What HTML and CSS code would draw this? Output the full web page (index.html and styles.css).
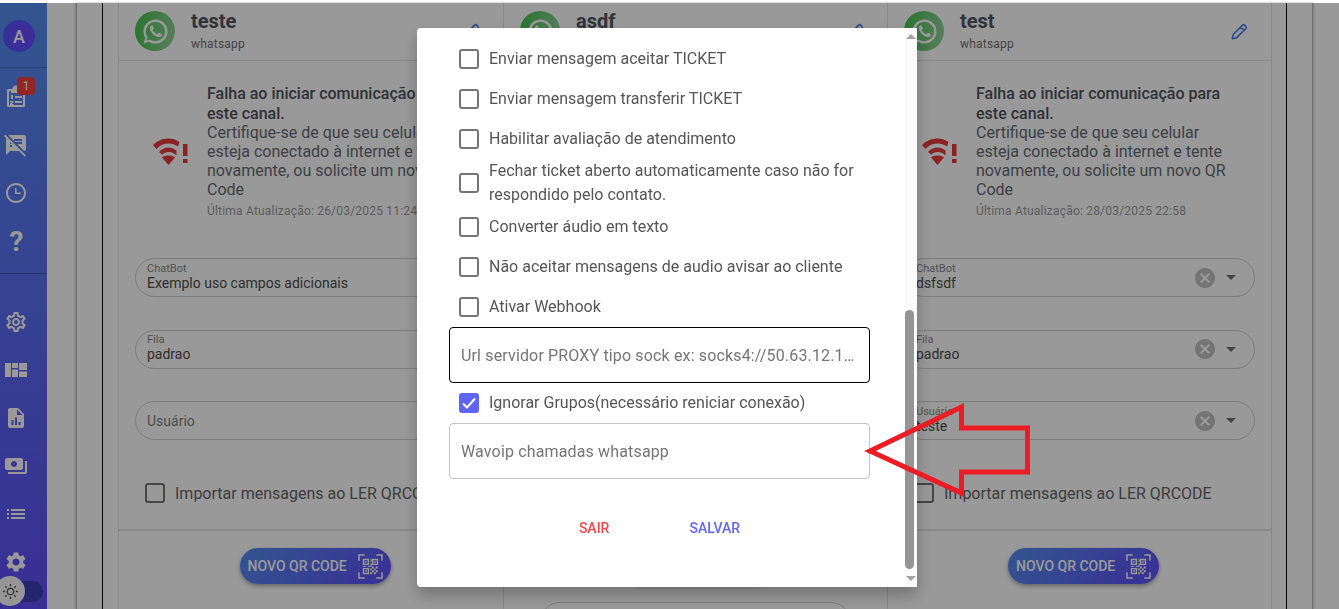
FILE: index.html
```html
<!DOCTYPE html>
<html lang="pt-BR">
<head>
<meta charset="utf-8">
<title>Conexões</title>
<link rel="stylesheet" href="styles.css">
</head>
<body>
<svg class="defs" aria-hidden="true">
  <defs>
    <symbol id="wa" viewBox="0 0 24 24"><path d="M16.75 13.96c.25.13.41.2.46.3.06.11.04.61-.21 1.18-.2.56-1.24 1.1-1.7 1.12-.46.02-.47.36-2.96-.73-2.49-1.09-3.99-3.75-4.11-3.92-.12-.17-.96-1.38-.92-2.61.05-1.22.69-1.8.95-2.04.24-.26.51-.29.68-.26h.47c.15 0 .36-.06.55.45l.69 1.87c.06.13.1.28.01.44l-.27.41-.39.42c-.12.12-.26.25-.12.5.12.26.62 1.09 1.32 1.78.91.88 1.71 1.17 1.95 1.3.24.14.39.12.54-.04l.81-.94c.19-.25.35-.19.58-.11l1.67.88M12 2a10 10 0 0 1 10 10 10 10 0 0 1-10 10c-1.97 0-3.8-.57-5.35-1.55L2 22l1.55-4.65A9.969 9.969 0 0 1 2 12 10 10 0 0 1 12 2m0 2a8 8 0 0 0-8 8c0 1.72.54 3.31 1.46 4.61L4.5 19.5l2.89-.96A7.95 7.95 0 0 0 12 20a8 8 0 0 0 8-8 8 8 0 0 0-8-8z"/></symbol>
    <symbol id="pen" viewBox="0 0 24 24"><path d="M4 20l1-5L16 4a2.2 2.2 0 0 1 3.1 0l.9.9a2.2 2.2 0 0 1 0 3.1L9 19z M14 6l4 4" fill="none" stroke="currentColor" stroke-width="2" stroke-linejoin="round"/></symbol>
    <symbol id="wifi" viewBox="0 0 36 30">
      <path d="M0 10C4.500 5.500 10 3.500 15.500 3.500c4 0 7.500 1 11 3.500l-1.500 4.500C22 9.500 19 8.500 15.500 8.500 11 8.500 7 10 3.500 14z"/>
      <path d="M6 17c2.700-3 5.800-4.500 9.500-4.500 2.800 0 5.300 1 8 3v5c-2.500-2.500-5-3.500-8-3.500-2.600 0-4.600 1-6 2.700z"/>
      <path d="M15.500 30L9 22.500c1.900-1.500 3.900-2 6.500-2s4.600.5 6.500 2z"/>
      <rect x="30" y="9" width="4.500" height="12"/><rect x="30" y="24" width="4.500" height="4"/>
    </symbol>
    <symbol id="clear" viewBox="0 0 20 20"><path d="M10 0C4.470 0 0 4.470 0 10s4.470 10 10 10 10-4.470 10-10S15.530 0 10 0zm5 13.590L13.590 15 10 11.410 6.410 15 5 13.590 8.590 10 5 6.410 6.410 5 10 8.590 13.590 5 15 6.410 11.410 10 15 13.590z"/></symbol>
    <symbol id="qr" viewBox="0 0 26 26">
      <path d="M1 7V1h6M19 1h6v6M25 19v6h-6M7 25H1v-6" fill="none" stroke="currentColor" stroke-width="1.600"/>
      <path fill="none" stroke="currentColor" stroke-width="1.500" d="M5.800 5.800h5v5h-5zM15.200 5.800h5v5h-5zM5.800 15.200h5v5h-5z"/>
      <path d="M7.500 7.500h1.600v1.600H7.500zM16.900 7.500h1.600v1.600h-1.600zM7.500 16.900h1.600v1.600H7.500zM13 5h1.200v3H13zM13 10h1.200v3H13zM5 12.400h3v1.200H5zM10 12.400h3v1.200h-3zM14.500 13h2v2h-2zM18.500 13h2v2h-2zM12.500 15h2v2h-2zM16.500 15h2v2h-2zM14.500 17h2v2h-2zM18.500 17h2v2h-2zM12.500 19h2v2h-2zM16.500 19h2v2h-2z"/>
    </symbol>
  </defs>
</svg>

<div class="app">
  <nav class="sidebar">
    <div class="side-top"><span class="avatar">A</span></div>
    <div class="side-group group-main">
      <span class="side-item">
        <svg class="side-icon" viewBox="0 0 24 24"><path fill-rule="evenodd" d="M4 4h4.500a3.500 3.500 0 0 1 7 0H20a1 1 0 0 1 1 1v16a1 1 0 0 1-1 1H4a1 1 0 0 1-1-1V5a1 1 0 0 1 1-1zm1 2v14h14V6h-2v2H7V6zm6 5h7v2h-7zm0 5h7v2h-7zM7 10h2v4H7zm-1 6h3.500v1.200L7.800 19h1.700v1H6v-1.200L7.700 17H6z"/></svg>
        <span class="badge">1</span>
      </span>
      <span class="side-item"><svg class="side-icon" viewBox="0 0 24 24"><path d="M10.540 11l-.54-.54L7.540 8 6 6.460 2.380 2.840 1.270 1.730 0 3l2.010 2.010L2 22l4-4h9l5.730 5.730L22 22.460 17.540 18l-7-7zM8 14H6v-2h2v2zm-2-3V9l2 2H6zm14-9H4.080L10 7.920V6h8v2h-7.920l1 1H18v2h-4.920l6.990 6.990C21.140 17.950 22 17.080 22 16V4c0-1.100-.9-2-2-2z"/></svg></span>
      <span class="side-item"><svg class="side-icon" viewBox="0 0 24 24"><path d="M11.990 2C6.470 2 2 6.480 2 12s4.470 10 9.990 10C17.520 22 22 17.520 22 12S17.520 2 11.990 2zM12 20c-4.420 0-8-3.580-8-8s3.580-8 8-8 8 3.580 8 8-3.580 8-8 8zm.5-13H11v6h6v-1.500h-4.500z"/></svg></span>
      <span class="side-item help">?</span>
    </div>
    <div class="side-group group-admin">
      <span class="side-item"><svg class="side-icon" viewBox="0 0 24 24"><path d="M19.430 12.980c.04-.32.07-.64.07-.98 0-.34-.03-.66-.07-.98l2.110-1.650c.19-.15.24-.42.12-.64l-2-3.460c-.09-.16-.26-.25-.44-.25-.06 0-.12.01-.17.03l-2.490 1c-.52-.4-1.080-.73-1.690-.98l-.38-2.650C14.460 2.180 14.250 2 14 2h-4c-.25 0-.46.18-.49.42l-.38 2.650c-.61.25-1.170.59-1.690.98l-2.490-1c-.06-.02-.12-.03-.18-.03-.17 0-.34.09-.43.25l-2 3.460c-.13.22-.07.49.12.64l2.110 1.650c-.04.32-.07.65-.07.98 0 .33.03.66.07.98l-2.110 1.650c-.19.15-.24.42-.12.64l2 3.460c.09.16.26.25.44.25.06 0 .12-.01.17-.03l2.490-1c.52.4 1.080.73 1.690.98l.38 2.650c.03.24.24.42.49.42h4c.25 0 .46-.18.49-.42l.38-2.650c.61-.25 1.170-.59 1.690-.98l2.490 1c.06.02.12.03.18.03.17 0 .34-.09.43-.25l2-3.460c.12-.22.07-.49-.12-.64l-2.110-1.650zm-1.980-1.710c.04.31.05.52.05.73 0 .21-.02.43-.05.73l-.14 1.130.89.7 1.080.84-.7 1.210-1.270-.51-1.040-.42-.9.68c-.43.32-.84.56-1.250.73l-1.060.43-.16 1.130-.2 1.350h-1.400l-.19-1.350-.16-1.130-1.060-.43c-.43-.18-.83-.41-1.230-.71l-.91-.7-1.060.43-1.270.51-.7-1.210 1.080-.84.89-.7-.14-1.130c-.03-.31-.05-.54-.05-.74s.02-.43.05-.73l.14-1.130-.89-.7-1.080-.84.7-1.210 1.270.51 1.040.42.9-.68c.43-.32.84-.56 1.250-.73l1.060-.43.16-1.130.2-1.350h1.390l.19 1.350.16 1.130 1.060.43c.43.18.83.41 1.230.71l.91.7 1.060-.43 1.270-.51.7 1.210-1.070.85-.89.7.14 1.130zM12 8c-2.210 0-4 1.790-4 4s1.790 4 4 4 4-1.790 4-4-1.790-4-4-4zm0 6c-1.100 0-2-.9-2-2s.9-2 2-2 2 .9 2 2-.9 2-2 2z"/></svg></span>
      <span class="side-item"><svg class="side-icon" viewBox="0 0 24 24"><path d="M1 5h6v14H1zM8 5h6v5H8zM8 11.500h6V19H8zM15 5h8v7h-8zM15 13.500h8V19h-8z"/></svg></span>
      <span class="side-item"><svg class="side-icon" viewBox="0 0 24 24"><path fill-rule="evenodd" d="M14 2H6a2 2 0 0 0-2 2v16a2 2 0 0 0 2 2h12a2 2 0 0 0 2-2V8zm-1 7V3.500L18.500 9zM7.500 19v-5h2v5zm3.500 0v-7.500h2V19zm3.500 0v-3h2v3z"/></svg></span>
      <span class="side-item"><svg class="side-icon" viewBox="0 0 24 24"><path d="M19 14V6c0-1.100-.9-2-2-2H3c-1.100 0-2 .9-2 2v8c0 1.100.9 2 2 2h14c1.100 0 2-.9 2-2zm-9-1c-1.660 0-3-1.340-3-3s1.340-3 3-3 3 1.340 3 3-1.340 3-3 3zm13-6v11c0 1.100-.9 2-2 2H4v-2h17V7h2z"/></svg></span>
      <span class="side-item"><svg class="side-icon" viewBox="0 0 24 24"><path d="M3 13h2v-2H3v2zm0 4h2v-2H3v2zm0-8h2V7H3v2zm4 4h14v-2H7v2zm0 4h14v-2H7v2zM7 7v2h14V7H7z"/></svg></span>
      <span class="side-item"><svg class="side-icon" viewBox="0 0 24 24"><path d="M19.140 12.940c.04-.3.06-.61.06-.94 0-.32-.02-.64-.07-.94l2.030-1.580c.18-.14.23-.41.12-.61l-1.920-3.320c-.12-.22-.37-.29-.59-.22l-2.390.96c-.5-.38-1.030-.7-1.620-.94l-.36-2.540c-.04-.24-.24-.41-.48-.41h-3.840c-.24 0-.43.17-.47.41l-.36 2.540c-.59.24-1.130.57-1.620.94l-2.390-.96c-.22-.08-.47 0-.59.22L2.740 8.870c-.12.21-.08.47.12.61l2.030 1.580c-.05.3-.09.63-.09.94s.02.64.07.94l-2.030 1.580c-.18.14-.23.41-.12.61l1.920 3.320c.12.22.37.29.59.22l2.390-.96c.5.38 1.030.7 1.620.94l.36 2.540c.05.24.24.41.48.41h3.840c.24 0 .44-.17.47-.41l.36-2.540c.59-.24 1.130-.56 1.620-.94l2.390.96c.22.08.47 0 .59-.22l1.920-3.320c.12-.22.07-.47-.12-.61l-2.010-1.580zM12 15.600c-1.980 0-3.600-1.620-3.600-3.600s1.620-3.600 3.600-3.600 3.600 1.620 3.600 3.600-1.620 3.600-3.600 3.600z"/></svg></span>
    </div>
    <div class="theme-toggle">
      <span class="theme-knob"><svg class="sun" viewBox="0 0 24 24"><circle cx="12" cy="12" r="4.500" fill="none" stroke="currentColor" stroke-width="1.800"/><path d="M12 1.500v3M12 19.500v3M1.500 12h3M19.500 12h3M4.600 4.600l2 2M17.400 17.400l2 2M4.600 19.400l2-2M17.400 6.600l2-2" stroke="currentColor" stroke-width="1.800" fill="none"/></svg></span>
    </div>
  </nav>

  <main class="main">
    <div class="shell">
      <div class="inner">
        <div class="cards">

          <section class="card">
            <header class="card-head">
              <span class="wa-badge"><svg class="wa-icon"><use href="#wa"/></svg></span>
              <div class="card-name"><h2>teste</h2><p>whatsapp</p></div>
              <svg class="pen"><use href="#pen"/></svg>
            </header>
            <div class="status">
              <svg class="wifi"><use href="#wifi"/></svg>
              <div class="status-text">
                <strong>Falha ao iniciar comunicação para este canal.</strong>
                <span>Certifique-se de que seu celular esteja conectado à internet e tente novamente, ou solicite um novo QR Code</span>
                <small>Última Atualização: 26/03/2025 11:24</small>
              </div>
            </div>
            <div class="fields">
              <div class="select"><div class="select-val"><label>ChatBot</label><span>Exemplo uso campos adicionais</span></div><svg class="clear"><use href="#clear"/></svg><i class="caret"></i></div>
              <div class="select"><div class="select-val"><label>Fila</label><span>padrao</span></div><svg class="clear"><use href="#clear"/></svg><i class="caret"></i></div>
              <div class="select"><div class="select-val select-empty"><span class="ph">Usuário</span></div><i class="caret"></i></div>
            </div>
            <label class="import"><i class="box"></i>Importar mensagens ao LER QRCODE</label>
            <div class="card-foot"><span class="qr-btn">NOVO QR CODE<svg class="qr"><use href="#qr"/></svg></span></div>
          </section>

          <section class="card">
            <header class="card-head">
              <span class="wa-badge"><svg class="wa-icon"><use href="#wa"/></svg></span>
              <div class="card-name"><h2>asdf</h2><p>whatsapp</p></div>
              <svg class="pen"><use href="#pen"/></svg>
            </header>
            <div class="status">
              <svg class="wifi"><use href="#wifi"/></svg>
              <div class="status-text">
                <strong>Falha ao iniciar comunicação para este canal.</strong>
                <span>Certifique-se de que seu celular esteja conectado à internet e tente novamente, ou solicite um novo QR Code</span>
                <small>Última Atualização: 26/03/2025 11:24</small>
              </div>
            </div>
            <div class="fields">
              <div class="select"><div class="select-val"><label>ChatBot</label><span>Exemplo</span></div><svg class="clear"><use href="#clear"/></svg><i class="caret"></i></div>
              <div class="select"><div class="select-val"><label>Fila</label><span>padrao</span></div><svg class="clear"><use href="#clear"/></svg><i class="caret"></i></div>
              <div class="select"><div class="select-val select-empty"><span class="ph">Usuário</span></div><i class="caret"></i></div>
            </div>
            <label class="import"><i class="box"></i>Importar mensagens ao LER QRCODE</label>
            <div class="card-foot"><span class="qr-btn">NOVO QR CODE<svg class="qr"><use href="#qr"/></svg></span></div>
            <div class="extra"></div>
          </section>

          <section class="card">
            <header class="card-head">
              <span class="wa-badge"><svg class="wa-icon"><use href="#wa"/></svg></span>
              <div class="card-name"><h2>test</h2><p>whatsapp</p></div>
              <svg class="pen"><use href="#pen"/></svg>
            </header>
            <div class="status">
              <svg class="wifi"><use href="#wifi"/></svg>
              <div class="status-text">
                <strong>Falha ao iniciar comunicação para este canal.</strong>
                <span>Certifique-se de que seu celular esteja conectado à internet e tente novamente, ou solicite um novo QR Code</span>
                <small>Última Atualização: 28/03/2025 22:58</small>
              </div>
            </div>
            <div class="fields">
              <div class="select"><div class="select-val"><label>ChatBot</label><span>dsfsdf</span></div><svg class="clear"><use href="#clear"/></svg><i class="caret"></i></div>
              <div class="select"><div class="select-val"><label>Fila</label><span>padrao</span></div><svg class="clear"><use href="#clear"/></svg><i class="caret"></i></div>
              <div class="select"><div class="select-val"><label>Usuário</label><span>teste</span></div><svg class="clear"><use href="#clear"/></svg><i class="caret"></i></div>
            </div>
            <label class="import"><i class="box"></i>Importar mensagens ao LER QRCODE</label>
            <div class="card-foot"><span class="qr-btn">NOVO QR CODE<svg class="qr"><use href="#qr"/></svg></span></div>
          </section>

        </div>
      </div>
    </div>
  </main>
</div>

<div class="backdrop"></div>

<div class="modal">
  <div class="modal-body">
    <label class="check"><i class="box"></i>Enviar mensagem aceitar TICKET</label>
    <label class="check"><i class="box"></i>Enviar mensagem transferir TICKET</label>
    <label class="check"><i class="box"></i>Habilitar avaliação de atendimento</label>
    <label class="check check-tall"><i class="box"></i><span>Fechar ticket aberto automaticamente caso não for respondido pelo contato.</span></label>
    <label class="check"><i class="box"></i>Converter áudio em texto</label>
    <label class="check"><i class="box"></i>Não aceitar mensagens de audio avisar ao cliente</label>
    <label class="check"><i class="box"></i>Ativar Webhook</label>
    <div class="input input-focus"><span>Url servidor PROXY tipo sock ex: socks4://50.63.12.101:1080</span></div>
    <label class="check"><i class="box box-on"><svg viewBox="0 0 20 20"><path d="M4 10.500l4 4 8-9" fill="none" stroke="#fff" stroke-width="2"/></svg></i>Ignorar Grupos(necessário reniciar conexão)</label>
    <div class="input"><span>Wavoip chamadas whatsapp</span></div>
    <div class="actions"><button class="btn btn-exit">SAIR</button><button class="btn btn-save">SALVAR</button></div>
  </div>
  <div class="scrollbar">
    <i class="arrow-up"></i>
    <div class="track"><div class="thumb"></div></div>
    <i class="arrow-down"></i>
  </div>
</div>

<svg class="annot" viewBox="0 0 175 104" aria-hidden="true">
  <polygon points="10,53 101.500,9 101.500,30 167.500,30 167.500,74 101.500,74 101.500,95" fill="none" stroke="#ed1c24" stroke-width="5"/>
</svg>
</body>
</html>
```
FILE: styles.css
```css
* { box-sizing: border-box; }
html, body { margin: 0; height: 100%; overflow: hidden; }
body { font-family: Roboto, "Liberation Sans", sans-serif; color: #555; background: #fff; }
.defs { width: 0; height: 0; position: absolute; }
.app { display: flex; height: 609px; padding-top: 3px; }

.sidebar { position: relative; width: 47px; flex: none; background: linear-gradient(180deg, #558eef 0%, #5f4ef8 100%); display: flex; flex-direction: column; color: #fff; }
.side-top { height: 65px; padding: 17px 0 0 3px; display: flex; border-bottom: 1px solid rgba(0,0,0,.2); }
.avatar { width: 32px; height: 32px; border-radius: 50%; background: #624dff; display: flex; align-items: center; justify-content: center; font-size: 18px; font-weight: 500; }
.side-group { display: flex; flex-direction: column; }
.group-main { height: 206px; padding-top: 5px; border-bottom: 1px solid rgba(0,0,0,.2); flex: none; }
.side-item { position: relative; height: 48px; display: flex; align-items: center; justify-content: center; padding-right: 15px; flex: none; }
.side-icon { width: 24px; height: 24px; fill: #fff; }
.help { font-size: 28px; font-weight: 700; padding-right: 14px; }
.badge { position: absolute; left: 17px; top: 4px; width: 18px; height: 18px; border-radius: 4px; background: #f44040; font-size: 12px; display: flex; align-items: center; justify-content: center; }
.group-admin { padding-top: 24px; }
.theme-toggle { position: absolute; left: 0; top: 578px; width: 43px; height: 21px; background: #3f3cb8; border-radius: 11px; }
.theme-knob { position: absolute; left: -5px; top: -5px; width: 30px; height: 30px; border-radius: 50%; background: #fafafa; color: #555; display: flex; align-items: center; justify-content: center; }
.sun { width: 17px; height: 17px; }

.main { flex: 1; padding-left: 29px; padding-right: 26px; background: #fff; min-width: 0; }
.shell { height: 100%; padding: 0 25px; border-left: 1px solid #bbb; border-right: 1px solid #bbb; box-shadow: -1px 0 2px rgba(0,0,0,.2), 1px 0 2px rgba(0,0,0,.2); }
.inner { height: 100%; padding: 0 14px 0 15px; border-left: 1px solid #000; border-right: 1px solid #000; }
.cards { display: grid; grid-template-columns: repeat(3, 1fr); border-left: 1px solid #e3e3e3; border-right: 1px solid #e3e3e3; }
.card { border-left: 1px solid #e3e3e3; min-width: 0; height: 640px; }
.card:first-child { border-left: 0; }

.card-head { height: 58px; padding: 8px 16px 0; display: flex; align-items: flex-start; border-bottom: 1px solid #e3e3e3; }
.wa-badge { width: 40px; height: 40px; border-radius: 50%; background: linear-gradient(100deg, #43c24f, #95d39a); display: flex; align-items: center; justify-content: center; flex: none; }
.wa-icon { width: 29px; height: 29px; fill: #fff; }
.card-name { margin-left: 16px; flex: 1; }
.card-name h2 { margin: 0; font-size: 20px; font-weight: 700; line-height: 20px; color: #50555e; }
.card-name p { margin: 4px 0 0; font-size: 12px; line-height: 18px; color: #717171; letter-spacing: .2px; }
.pen { width: 20px; height: 20px; color: #4e84ea; margin-top: 11px; margin-right: 6px; flex: none; }

.status { height: 165px; padding: 13px 0 0 34px; display: flex; align-items: center; }
.wifi { width: 36px; height: 30px; fill: #e63c3c; flex: none; }
.status-text { margin-left: 18px; width: 262px; flex: none; font-size: 16px; line-height: 19.2px; color: #676b75; display: flex; flex-direction: column; padding-top: 2px; }
.status-text strong { font-weight: 500; color: #50525d; }
.status-text small { font-size: 12px; line-height: 14px; margin-top: 4px; color: #999; letter-spacing: .2px; }

.fields { padding: 0 16px; display: flex; flex-direction: column; gap: 32.5px; margin-top: 32px; }
.select { height: 39px; border: 1px solid #d0d0d0; border-radius: 20px; padding: 0 18px 0 11px; display: flex; align-items: center; }
.select-val { flex: 1; display: flex; flex-direction: column; min-width: 0; margin-bottom: 4px; }
.select-empty { margin-bottom: 0; }
.select-val label { font-size: 11px; line-height: 12px; color: #888; margin-top: 2px; }
.select-val span { font-size: 14px; line-height: 16px; color: #4d4d4d; white-space: nowrap; }
.select-val .ph { color: #808080; }
.clear { width: 20px; height: 20px; fill: #c4c4c4; flex: none; margin-right: 1px; }
.caret { width: 0; height: 0; border-left: 5px solid transparent; border-right: 5px solid transparent; border-top: 5px solid #707070; flex: none; margin-left: 10px; }

.import { display: flex; align-items: center; height: 22px; margin: 42px 0 0 26px; font-size: 16px; color: #666; white-space: nowrap; }
.box { width: 20px; height: 20px; border: 2px solid #757575; border-radius: 3px; flex: none; margin-right: 10px; display: block; }
.card-foot { margin-top: 25px; border-top: 2px solid #e3e3e3; padding: 17px 0 0 8px; display: flex; justify-content: center; }
.qr-btn { width: 151px; height: 36px; border-radius: 18px; background: linear-gradient(135deg, #558eef, #5f4ef8); color: #fff; font-size: 14px; font-weight: 500; padding-left: 8px; display: flex; align-items: center; box-shadow: 0 2px 4px rgba(0,0,0,.35); white-space: nowrap; }
.qr { width: 25px; height: 25px; margin-left: 11px; fill: #fff; color: #fff; flex: none; }
.extra { height: 40px; margin: 18px 36px 0; border: 1px solid #d0d0d0; border-radius: 20px; }

.backdrop { position: fixed; left: 0; right: 0; top: 3px; bottom: 0; background: rgba(0,0,0,.4); }

.modal { position: fixed; left: 417px; top: 28px; width: 500px; height: 559px; background: #fff; border-radius: 4px 0 0 4px; box-shadow: 0 8px 16px rgba(0,0,0,.25); display: flex; }
.modal-body { flex: 1; min-width: 0; padding: 11px 0 0 32px; display: flex; flex-direction: column; align-items: flex-start; }
.check { display: flex; align-items: center; height: 40px; width: 421px; padding-left: 10px; font-size: 16px; line-height: 24px; color: #555; flex: none; }
.check-tall { height: 48px; }
.check-tall span { width: 385px; }
.box-on { background: #5e65f4; border-color: #5e65f4; padding: 0; }
.box-on svg { display: block; width: 20px; height: 20px; margin: -2px; }
.input { width: 421px; height: 56px; border: 1px solid #c4c4c4; border-radius: 4px; padding: 0 11px; display: flex; align-items: center; font-size: 16px; letter-spacing: .15px; color: #757575; flex: none; }
.input span { overflow: hidden; text-overflow: ellipsis; white-space: nowrap; }
.input-focus { border-color: #000; }
.actions { width: 421px; margin-top: 34px; display: flex; justify-content: center; gap: 48px; }
.btn { background: none; border: 0; font: 500 14px/20px Roboto, sans-serif; padding: 5px 16px; }
.btn-exit { color: #f44848; }
.btn-save { color: #6366f1; }

.scrollbar { width: 12px; flex: none; background: #fbfbfb; display: flex; flex-direction: column; align-items: center; padding: 6px 0; }
.arrow-up { width: 0; height: 0; border-left: 5px solid transparent; border-right: 5px solid transparent; border-bottom: 5px solid #a3a3a3; flex: none; }
.arrow-down { width: 0; height: 0; border-left: 5px solid transparent; border-right: 5px solid transparent; border-top: 5px solid #a3a3a3; flex: none; }
.track { flex: 1; width: 100%; padding-top: 271px; }
.thumb { width: 9px; height: 259px; background: #959595; border-radius: 5px; }

.annot { position: fixed; left: 860px; top: 398px; width: 175px; height: 104px; }
```
